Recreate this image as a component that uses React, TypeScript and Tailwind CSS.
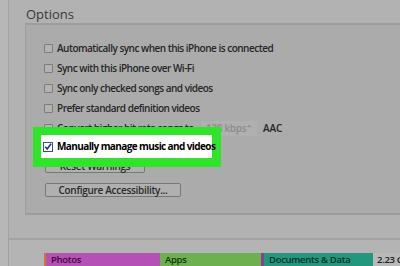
import React from "react";

const font = { fontFamily: '"Open Sans", "Liberation Sans", sans-serif' };

function Box() {
    return <span className="w-[9px] h-[9px] shrink-0 border border-[#7d7d7d] bg-[#b3b3b3] rounded-[1px]" />;
}

function Row({ label, children }: { label: string; children?: React.ReactNode }) {
    return (
        <div className="h-[20px] flex items-center gap-[4px] pl-[18px]">
            <Box />
            <span className="text-[10px] font-semibold text-[#262626] tracking-[-0.5px] whitespace-nowrap">{label}</span>
            {children}
        </div>
    );
}

export default function App() {
    return (
        <div className="w-[400px] h-[266px] overflow-hidden flex bg-[#b2b2b2] relative" style={font}>
            {/* left sidebar edge */}
            <div className="w-[9px] shrink-0 bg-[#b7b7b7] border-r border-[#a2a2a2]" />

            <div className="flex-1 flex flex-col">
                <div className="h-[27px] pl-[17px] pt-[5px] text-[13px] text-[#3a3a3a] leading-[18px]">Options</div>

                {/* options group */}
                <div className="ml-[16px] h-[192px] shrink-0 border-t-2 border-l border-b-2 border-[#9d9d9d] bg-[#ababab] pt-[13px]">
                    <Row label="Automatically sync when this iPhone is connected" />
                    <Row label="Sync with this iPhone over Wi-Fi" />
                    <Row label="Sync only checked songs and videos" />
                    <Row label="Prefer standard definition videos" />
                    <Row label="Convert higher bit rate songs to">
                        <div className="ml-[3px] h-[15px] w-[56px] flex items-center justify-between px-[5px] bg-[#b0b0b0] text-[10px] text-[#8c8c8c] font-semibold whitespace-nowrap tracking-[-0.3px]">
                            <span>128 kbps</span>
                            <span className="text-[8px] leading-none">⌃</span>
                        </div>
                        <span className="ml-[2px] text-[10px] font-semibold text-[#262626]">AAC</span>
                    </Row>
                    <div className="h-[20px]" />
                    <div className="flex flex-col gap-[10px] pl-[19px] pt-[1px]">
                        <button className="w-[100px] h-[14px] border border-[#777] rounded-[2px] bg-[#b0b0b0] text-[10px] font-semibold text-[#2a2a2a] leading-none tracking-[-0.3px]">
                            Reset Warnings
                        </button>
                        <button className="w-[136px] h-[14px] border border-[#777] rounded-[2px] bg-[#b0b0b0] text-[10px] font-semibold text-[#2a2a2a] leading-none tracking-[-0.3px]">
                            Configure Accessibility...
                        </button>
                    </div>
                </div>

                <div className="h-[23px] shrink-0" />
                <div className="flex-1 border-t-2 border-[#a3a3a3] bg-[#b4b4b4] pt-[12px] pl-[35px]">
                    {/* capacity bar */}
                    <div className="flex h-[20px] text-[9.5px] font-semibold leading-[13px] pt-[1px] tracking-[-0.3px]">
                        <div className="w-[116px] bg-[#b450b6] border-l-2 border-[#c9763a] pl-[5px] text-[#3b0a3c]">Photos</div>
                        <div className="w-[101px] bg-[#6cb04f] pl-[5px] text-[#17350c]">Apps</div>
                        <div className="w-[3px] bg-[#8a3f8e]" />
                        <div className="w-[109px] bg-[#22977e] pl-[5px] text-[#08302a]">Documents &amp; Data</div>
                        <div className="flex-1 min-w-0 overflow-hidden bg-[#b9b9b9] pl-[4px] text-[#222] whitespace-nowrap">2.23 GB</div>
                    </div>
                </div>
            </div>

            {/* highlight annotation */}
            <div className="absolute left-[33px] top-[127px] w-[188px] h-[40px] bg-[#2ee52a] p-[8px] pr-[9px]">
                <div className="w-full h-[23px] bg-white flex items-center gap-[4px] pl-[2px]">
                    <span className="w-[10px] h-[10px] shrink-0 border border-[#3d4f7a] bg-white flex items-center justify-center">
                        <svg width="9" height="9" viewBox="0 0 10 10">
                            <path d="M1.5 5.2 L4 8 L8.8 1.5" fill="none" stroke="#1d3a8a" strokeWidth="2" />
                        </svg>
                    </span>
                    <span className="text-[10px] font-bold text-black tracking-[-0.6px] whitespace-nowrap">Manually manage music and videos</span>
                </div>
            </div>
        </div>
    );
}
